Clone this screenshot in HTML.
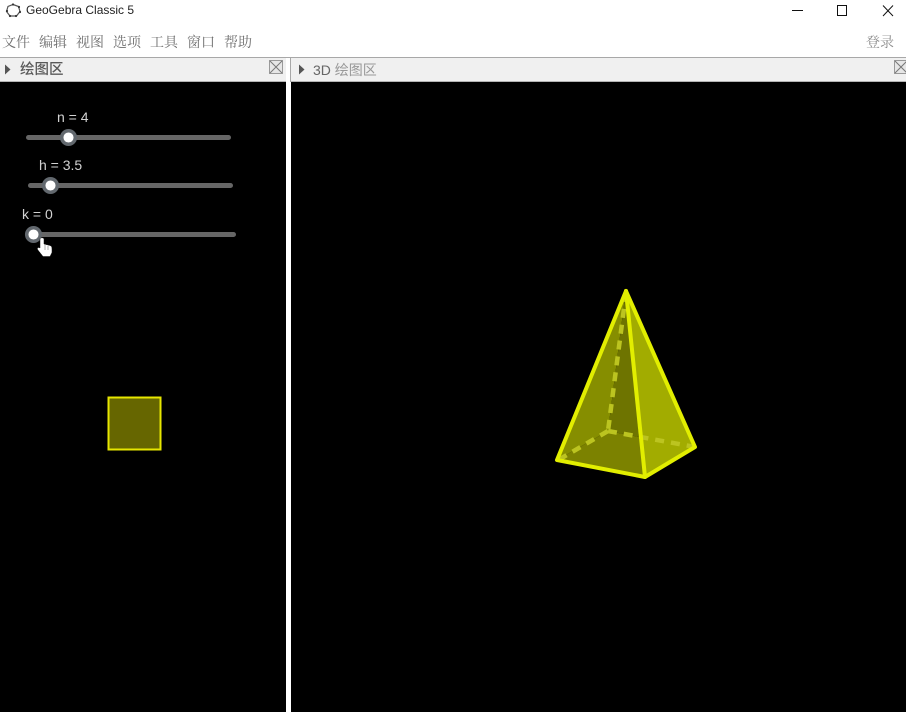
<!DOCTYPE html>
<html><head><meta charset="utf-8">
<style>
html,body{margin:0;padding:0;width:906px;height:712px;overflow:hidden;background:#fff}
body{position:relative;font-family:"Liberation Sans","Noto Sans CJK SC",sans-serif}
.a{position:absolute;white-space:nowrap}
.m{top:33px;font-size:14px;line-height:18px;color:#6e6e6e;font-family:"Noto Serif CJK SC","Noto Sans CJK SC",sans-serif}
.l{font-size:14px;line-height:16px;color:#d2d2d2}
</style></head>
<body>
<svg class="a" style="left:5px;top:3px" width="17" height="15" viewBox="0 0 17 15"><path d="M8 1.500 L13.500 3.500 L15 8.500 L11.500 13 L5 13 L1.500 8.500 L3 3.500 Z" fill="none" stroke="#555" stroke-width="1.200"/><g fill="#333"><circle cx="8" cy="1.500" r="1.100"/><circle cx="14" cy="4" r="1.100"/><circle cx="15" cy="9" r="1.100"/><circle cx="11" cy="13" r="1.100"/><circle cx="5" cy="13" r="1.100"/><circle cx="2" cy="8" r="1.100"/></g></svg>
<div class="a" style="left:26px;top:3px;font-size:12px;line-height:15px;color:#222">GeoGebra Classic 5</div>
<svg class="a" style="left:790px;top:3px" width="110" height="15" viewBox="0 0 110 15"><path d="M2 7.500H13" stroke="#111" stroke-width="1"/><path d="M47.500 2.500H56.500V12.500H47.500Z" fill="none" stroke="#111" stroke-width="1"/><path d="M93 2.500L103 13M103 2.500L93 13" stroke="#111" stroke-width="1"/></svg>

<div class="a m" style="left:2px">文件</div>
<div class="a m" style="left:39px">编辑</div>
<div class="a m" style="left:76px">视图</div>
<div class="a m" style="left:113px">选项</div>
<div class="a m" style="left:150px">工具</div>
<div class="a m" style="left:187px">窗口</div>
<div class="a m" style="left:224px">帮助</div>
<div class="a m" style="left:866px;color:#8a8a8a">登录</div>

<div class="a" style="left:0;top:57px;width:906px;height:1px;background:#a8a8a8"></div>
<div class="a" style="left:0;top:58px;width:906px;height:23px;background:#f0f0f0"></div>
<div class="a" style="left:0;top:81px;width:906px;height:1px;background:#b4b4b4"></div>
<div class="a" style="left:0;top:82px;width:906px;height:630px;background:#000"></div>
<div class="a" style="left:286px;top:58px;width:5px;height:654px;background:#fff"></div>
<div class="a" style="left:290px;top:58px;width:1px;height:24px;background:#a8a8a8"></div>

<svg class="a" style="left:4px;top:64px" width="7" height="11"><path d="M1 0.500L6.500 5.500L1 10.500Z" fill="#555"/></svg>
<div class="a" style="left:20px;top:60px;font-size:14.500px;line-height:18px;color:#5a5a5a;font-weight:500;font-family:'Noto Sans CJK SC',sans-serif">绘图区</div>
<svg class="a" style="left:269px;top:60px" width="14" height="14"><rect x="0.500" y="0.500" width="13" height="13" fill="#e6e6e6" stroke="#999"/><path d="M1 1L13 13M13 1L1 13" stroke="#777" stroke-width="1"/></svg>

<svg class="a" style="left:298px;top:64px" width="7" height="11"><path d="M1 0.500L6.500 5.500L1 10.500Z" fill="#555"/></svg>
<div class="a" style="left:313px;top:61px;font-size:14px;line-height:18px;color:#666">3D <span style="color:#999;font-family:'Noto Sans CJK SC',sans-serif">绘图区</span></div>
<svg class="a" style="left:894px;top:60px" width="12" height="14"><rect x="0.500" y="0.500" width="13" height="13" fill="#e6e6e6" stroke="#999"/><path d="M1 1L13 13M13 1L1 13" stroke="#777" stroke-width="1"/></svg>

<div class="a l" style="left:57px;top:109px">n = 4</div>
<div class="a l" style="left:39px;top:157px">h = 3.5</div>
<div class="a l" style="left:22px;top:206px">k = 0</div>

<svg class="a" style="left:0;top:82px" width="286" height="630" viewBox="0 82 286 630">
 <g stroke="#666" stroke-width="5" stroke-linecap="round">
  <path d="M28.500 137.500H228.500"/><path d="M30.500 185.500H230.500"/><path d="M33.500 234.500H233.500"/>
 </g>
 <g fill="#fff" stroke="#62686e" stroke-width="3.500">
  <circle cx="68.500" cy="137.500" r="6.800"/><circle cx="50.500" cy="185.500" r="6.800"/><circle cx="33.500" cy="234.500" r="6.800"/>
 </g>
 <path d="M40 238.500 C41 237.500 43.500 237.500 44 239 V244 L50 245.500 C51.500 246 52 247 52 249 V252.500 L50 256.500 H43 L37.500 249.500 C37 247.500 38.500 247 40 248 Z" fill="#fff" stroke="#111" stroke-width="0.500"/>
 <path d="M45 245V250M48 246V250" stroke="#777" stroke-width="0.600"/>
 <rect x="108.500" y="397.500" width="52" height="52" fill="#666600" stroke="#e6e600" stroke-width="2"/>
</svg>

<svg class="a" style="left:291px;top:82px" width="615" height="630" viewBox="291 82 615 630">
 <path d="M626 289L557 460L608 431Z" fill="#868e00"/>
 <path d="M626 289L608 431L639 437Z" fill="#6e7400"/>
 <path d="M557 460L608 431L639 437L645 477Z" fill="#7c8200"/>
 <path d="M626 289L645 477L695 447Z" fill="#a2ac00"/>
 <g stroke="#bcc420" stroke-width="4.500" fill="none" stroke-dasharray="9 7">
  <path d="M626 293L608 431"/><path d="M608 431L695 447"/><path d="M608 431L560 459"/>
 </g>
 <g stroke="#e2ee00" stroke-width="4" fill="none" stroke-linecap="round" stroke-linejoin="round">
  <path d="M626 291L557 460L645 477L695 447L626 291"/><path d="M626 291L645 477"/>
 </g>
</svg>
</body></html>
